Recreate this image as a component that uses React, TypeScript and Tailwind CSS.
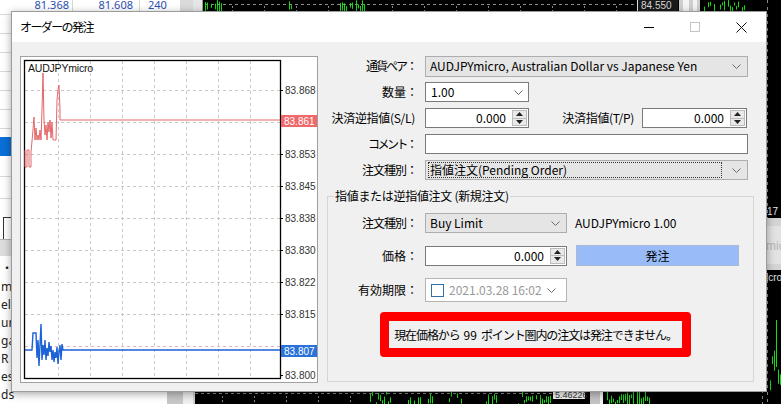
import React from "react";

const JP = "font-['Noto_Sans_CJK_JP','Noto_Sans',sans-serif]";

function rng(seed: number) {
  let s = seed;
  return () => {
    s = (s * 9301 + 49297) % 233280;
    return s / 233280;
  };
}

function greenBars(x0: number, x1: number, y0: number, y1: number, seed: number, density = 0.75) {
  const r = rng(seed);
  const out: React.ReactNode[] = [];
  for (let x = x0; x <= x1; x += 2) {
    if (r() > density) continue;
    const a = y0 + r() * (y1 - y0);
    const b = y0 + r() * (y1 - y0);
    out.push(
      <line
        key={`${seed}-${x}`}
        x1={x + 0.5}
        x2={x + 0.5}
        y1={Math.min(a, b)}
        y2={Math.max(a, b) + 3}
        stroke="#14e014"
        strokeWidth="1"
      />
    );
  }
  return out;
}

function Chevron() {
  return (
    <svg width="9" height="5" viewBox="0 0 9 5" className="shrink-0">
      <polyline points="0.5,0.5 4.5,4.5 8.5,0.5" fill="none" stroke="#6b6b6b" strokeWidth="1" />
    </svg>
  );
}

function Spinner() {
  return (
    <div className="flex flex-col w-[15px] my-[1px] mr-[1px] border border-[#bcbcbc] bg-[#e9e9e9]">
      <div className="flex-1 flex items-center justify-center border-b border-[#bcbcbc]">
        <svg width="7" height="4" viewBox="0 0 7 4">
          <polygon points="0,4 3.5,0 7,4" fill="#222" />
        </svg>
      </div>
      <div className="flex-1 flex items-center justify-center">
        <svg width="7" height="4" viewBox="0 0 7 4">
          <polygon points="0,0 7,0 3.5,4" fill="#222" />
        </svg>
      </div>
    </div>
  );
}

function NumberBox({ className }: { className: string }) {
  return (
    <div className={"flex h-[20px] border border-[#7a7a7a] bg-white " + className}>
      <div className="flex-1 flex items-center justify-end pr-[6px] text-[12px]">0.000</div>
      <Spinner />
    </div>
  );
}

function Label({ text, colon = true, className }: { text: string; colon?: boolean; className: string }) {
  return (
    <div className={"shrink-0 text-right text-[12px] text-black whitespace-nowrap " + className}>
      {text}
      {colon && <span className="inline-block w-[12px] text-center tracking-normal">：</span>}
    </div>
  );
}

// page coords -> chart svg coords (svg origin at page 21,57)
const toPts = (pts: number[][]) => pts.map(([x, y]) => `${x - 21},${y - 57}`).join(" ");

const ASK = [
  [25, 150], [25, 167], [27, 167], [27, 150], [29, 150], [29, 167], [31, 167], [31, 152],
  [33, 130], [34, 117], [35, 140], [36, 128], [37, 140], [38, 135], [39, 140], [40, 130],
  [41, 140], [42, 110], [43, 73], [44, 120], [45, 135], [46, 125], [47, 140], [48, 122],
  [49, 132], [50, 120], [51, 138], [52, 122], [53, 140], [56, 140], [57, 100], [58, 90],
  [59, 85], [60, 110], [60, 120], [280, 120],
];

const BID = [
  [25, 350], [32, 350], [33, 333], [36, 333], [37, 358], [38, 340], [39, 366], [40, 345],
  [41, 324], [42, 360], [43, 345], [44, 355], [45, 340], [46, 360], [47, 348], [48, 356],
  [49, 342], [50, 352], [51, 346], [52, 360], [53, 350], [54, 362], [55, 352], [56, 358],
  [57, 347], [58, 364], [59, 352], [60, 345], [61, 360], [62, 344], [63, 350], [280, 350],
];

const V_GRID = [37, 69, 101, 133, 165, 197, 229];
const H_GRID = [33, 65, 97, 129, 161, 193, 225, 257, 289];
const AXIS: [number, string][] = [
  [33, "83.868"],
  [97, "83.853"],
  [129, "83.845"],
  [161, "83.838"],
  [193, "83.830"],
  [225, "83.822"],
  [257, "83.815"],
  [318, "83.800"],
];

function PriceChart() {
  return (
    <div className="w-[298px] h-[327px] shrink-0 border border-[#a0a0a0] bg-white">
      <svg width="296" height="325" viewBox="0 0 296 325" className="block">
        {V_GRID.map((x) => (
          <line key={"v" + x} x1={x + 0.5} x2={x + 0.5} y1="4" y2="322" stroke="#c9c9c9" strokeDasharray="3 3" />
        ))}
        {H_GRID.map((y) => (
          <line key={"h" + y} x1="4" x2="259" y1={y + 0.5} y2={y + 0.5} stroke={y === 289 ? "#e6b3c4" : "#c9c9c9"} strokeDasharray="3 3" />
        ))}
        <rect x="3.5" y="3.5" width="256" height="318" fill="none" stroke="#000" strokeWidth="1.3" />
        {AXIS.map(([y, t]) => (
          <g key={t}>
            <line x1="259" x2="262" y1={y + 0.5} y2={y + 0.5} stroke="#000" />
            <text x="264" y={y + 4} fontSize="10" fontFamily="'Liberation Sans', sans-serif" fill="#333">
              {t}
            </text>
          </g>
        ))}
        <text x="7" y="15" fontSize="10.5" fontFamily="'Liberation Sans', sans-serif" fill="#111" letterSpacing="-0.2">
          AUDJPYmicro
        </text>
        <polyline points={toPts(ASK)} fill="none" stroke="#e4676a" strokeWidth="1" />
        <polyline points={toPts(BID)} fill="none" stroke="#1d62d6" strokeWidth="1.4" />
        <rect x="260" y="58" width="36" height="12" fill="#f0686a" />
        <text x="263" y="68" fontSize="10" fontFamily="'Liberation Sans', sans-serif" fill="#fff">
          83.861
        </text>
        <rect x="260" y="288" width="36" height="12" fill="#2a72d9" />
        <text x="263" y="298" fontSize="10" fontFamily="'Liberation Sans', sans-serif" fill="#fff">
          83.807
        </text>
      </svg>
    </div>
  );
}

function Backdrop() {
  return (
    <svg width="588" height="404" viewBox="0 0 588 404" className="block shrink-0">
      <g transform="translate(-193,0)">
        <rect x="193" y="0" width="588" height="404" fill="#000" />
        <rect x="193" y="0" width="10" height="14" fill="#e6e6e6" />
        <line x1="202.5" x2="202.5" y1="0" y2="14" stroke="#9a9a9a" />
        <rect x="193" y="386" width="2" height="18" fill="#d0d0d0" />
        {/* top chart strip */}
        <line x1="205" x2="637" y1="4.5" y2="4.5" stroke="#8a8a8a" strokeDasharray="3 3" />
        {[232, 264, 296, 328, 360, 392, 424, 456, 488, 520, 552, 584, 616].map((x) => (
          <line key={"t" + x} x1={x + 0.5} x2={x + 0.5} y1="6" y2="12" stroke="#8a8a8a" strokeDasharray="2 2" />
        ))}
        {greenBars(205, 222, 0, 10, 3)}
        {greenBars(289, 292, 0, 12, 7)}
        {greenBars(340, 364, 0, 10, 11)}
        <rect x="637" y="0" width="41" height="12" fill="#1a1a1a" />
        <line x1="637.5" x2="637.5" y1="0" y2="12" stroke="#e0e0e0" />
        <text x="641" y="9" fontSize="10" fontFamily="'Liberation Sans', sans-serif" fill="#d8d8d8">
          84.550
        </text>
        <rect x="679" y="0" width="21" height="14" fill="#cfcfcf" />
        <rect x="683" y="0" width="6" height="14" fill="#f4f4f4" />
        <rect x="693" y="0" width="4" height="14" fill="#f4f4f4" />
        {greenBars(702, 745, 0, 10, 19)}
        {/* right edge */}
        <line x1="767.5" x2="767.5" y1="0" y2="404" stroke="#8a8a8a" strokeDasharray="3 4" />
        <text x="767" y="215" fontSize="10" fontFamily="'Liberation Sans', sans-serif" fill="#e8e8e8">
          17 M
        </text>
        <rect x="766" y="218" width="15" height="52" fill="#d4d4d4" />
        <rect x="766" y="226" width="15" height="38" fill="#e2e2e2" />
        <text x="766" y="250" fontSize="12" fontFamily="'Liberation Sans', sans-serif" fill="#b4b4b4">
          mic
        </text>
        <text x="766" y="281" fontSize="10" fontFamily="'Liberation Sans', sans-serif" fill="#e0e0e0">
          icro,
        </text>
        {greenBars(770, 781, 318, 392, 23, 0.9)}
        {/* bottom strip */}
        <line x1="195" x2="552" y1="393.5" y2="393.5" stroke="#8a8a8a" strokeDasharray="3 3" />
        {[222, 254, 286, 318, 350].map((x) => (
          <line key={"b" + x} x1={x + 0.5} x2={x + 0.5} y1="396" y2="404" stroke="#8a8a8a" strokeDasharray="2 2" />
        ))}
        {greenBars(370, 392, 391, 404, 31)}
        {greenBars(408, 432, 393, 404, 37)}
        {greenBars(445, 462, 391, 404, 41)}
        {greenBars(484, 497, 393, 404, 43)}
        {greenBars(518, 536, 391, 404, 47)}
        {greenBars(540, 550, 395, 404, 53)}
        <rect x="553" y="390" width="32" height="9" fill="#f2f2f2" />
        <text x="555" y="398" fontSize="9" fontFamily="'Liberation Sans', sans-serif" fill="#333">
          5.46226
        </text>
        <rect x="590" y="390" width="10" height="14" fill="#c4c4c4" />
        <rect x="600" y="390" width="3" height="14" fill="#f0f0f0" />
        {greenBars(607, 650, 391, 404, 59, 0.85)}
        <line x1="762.5" x2="762.5" y1="390" y2="404" stroke="#8a8a8a" strokeDasharray="3 3" />
      </g>
    </svg>
  );
}

function LeftPanels() {
  const lowerRows = ["・ウ", "mp", "el", "ur", "ga", "R", "esc", "ds"];
  return (
    <div className="w-[193px] shrink-0 flex flex-col bg-white font-['Noto_Sans','Noto_Sans_CJK_JP',sans-serif]">
      {/* market watch */}
      <div className="h-[210px] flex overflow-hidden">
        <div className="flex-1 flex flex-col">
          <div className="h-[19px] mt-[-4px] flex items-center border-b border-[#d8d8d8] text-[11px] text-[#2b4fb5]">
            <div className="w-[73px] h-full flex items-center justify-end pr-[3px] border-r border-[#d8d8d8]">81.368</div>
            <div className="w-[67px] h-full flex items-center justify-end pr-[6px] border-r border-[#d8d8d8]">81.608</div>
            <div className="pl-[8px]">240</div>
          </div>
          {[0, 1, 2, 3, 4, 5].map((i) => (
            <div key={i} className="h-[19px] border-b border-[#d8d8d8]" />
          ))}
          <div className="h-[8px]" />
          <div className="h-[19px] bg-[#0a6fd6]" />
          <div className="h-[21px] border-b border-[#d8d8d8]" />
          <div className="h-[22px] border-b border-[#d8d8d8]" />
        </div>
        <div className="w-[13px] bg-[#dadada]" />
      </div>
      {/* navigator */}
      <div className="flex-1 flex">
        <div className="flex-1 flex flex-col">
          <div className="h-[8px]" />
          <div className="h-[22px] ml-[3px] border-l border-t border-[#333] bg-white" />
          <div className="h-[17px] bg-[#dcdcdc] border-t border-[#b0b0b0]" />
          <div className="flex flex-col pt-[4px]">
            {lowerRows.map((t) => (
              <div key={t} className="h-[18px] flex items-center text-[12px] text-[#222] pl-[1px]">
                {t}
              </div>
            ))}
          </div>
        </div>
        <div className="w-[16px] bg-[#c8c8c8]" />
        <div className="w-[10px] bg-[#f0f0f0]" />
      </div>
    </div>
  );
}

function OrderDialog() {
  return (
    <div
      className={
        "absolute left-[11px] top-[11px] w-[756px] h-[381px] flex flex-col border border-[#9c9c9c] bg-[#f0f0f0] shadow-[0_2px_8px_rgba(0,0,0,0.35)] text-black " +
        JP
      }
    >
      {/* title bar */}
      <div className="h-[30px] shrink-0 flex items-center bg-white">
        <div className="pl-[8px] text-[12px] flex-1 tracking-[-1.6px]">オーダーの発注</div>
        <div className="flex h-full pr-[2px]">
          <div className="w-[46px] flex items-center justify-center">
            <div className="w-[10px] h-px bg-black" />
          </div>
          <div className="w-[46px] flex items-center justify-center">
            <div className="w-[10px] h-[10px] border border-[#c4c4c4]" />
          </div>
          <div className="w-[46px] flex items-center justify-center">
            <svg width="11" height="11" viewBox="0 0 11 11">
              <path d="M0.5 0.5 L10.5 10.5 M10.5 0.5 L0.5 10.5" stroke="#111" strokeWidth="1" />
            </svg>
          </div>
        </div>
      </div>

      {/* body */}
      <div className="flex-1 flex pl-[8px] pt-[14px] gap-[9px]">
        <PriceChart />

        <div className="w-[427px] flex flex-col">
          <div className="flex flex-col gap-[6px]">
            <div className="h-[20px] flex items-center">
              <Label text="通貨ペア" className="w-[91px] tracking-[-2px]" />
              <div className="ml-[7px] w-[323px] h-[21px] flex items-center border border-[#adadad] bg-[#e5e5e5] pl-[4px] pr-[6px]">
                <div className="flex-1 text-[12px]">AUDJPYmicro, Australian Dollar vs Japanese Yen</div>
                <Chevron />
              </div>
            </div>
            <div className="h-[20px] flex items-center">
              <Label text="数量" className="w-[91px]" />
              <div className="ml-[7px] w-[104px] h-[20px] flex items-center border border-[#7a7a7a] bg-white pl-[5px] pr-[5px]">
                <div className="flex-1 text-[12px]">1.00</div>
                <Chevron />
              </div>
            </div>
            <div className="h-[20px] flex items-center">
              <Label text="決済逆指値(S/L)" colon={false} className="w-[88px] mr-[3px] tracking-[-0.3px]" />
              <NumberBox className="ml-[7px] w-[104px]" />
              <Label text="決済指値(T/P)" colon={false} className="w-[105px] tracking-[-0.3px]" />
              <NumberBox className="ml-[8px] w-[105px]" />
            </div>
            <div className="h-[20px] flex items-center">
              <Label text="コメント" className="w-[91px] tracking-[-2.5px]" />
              <div className="ml-[7px] w-[323px] h-[20px] border border-[#7a7a7a] bg-white" />
            </div>
            <div className="h-[20px] flex items-center">
              <Label text="注文種別" className="w-[91px] tracking-[-1px]" />
              <div className="ml-[7px] w-[323px] h-[20px] flex items-center border border-[#adadad] bg-[#e5e5e5] pl-[2px] pr-[6px]">
                <div className="flex-1 h-[16px] mr-[10px] flex items-center border border-dotted border-[#333] pl-[1px] text-[12px]">
                  指値注文(Pending Order)
                </div>
                <Chevron />
              </div>
            </div>
          </div>

          <fieldset className="mt-[8px] h-[194px] border border-[#d5d5d5]">
            <legend className="ml-[6px] px-[1px] text-[12px] leading-[16px] tracking-[-0.3px]">指値または逆指値注文 (新規注文)</legend>
            <div className="flex flex-col pt-[9px]">
              <div className="h-[20px] flex items-center">
                <Label text="注文種別" className="w-[90px] tracking-[-1px]" />
                <div className="ml-[7px] w-[142px] h-[20px] flex items-center border border-[#adadad] bg-[#e5e5e5] pl-[4px] pr-[6px]">
                  <div className="flex-1 text-[12px]">Buy Limit</div>
                  <Chevron />
                </div>
                <div className="ml-[8px] text-[12px]">AUDJPYmicro 1.00</div>
              </div>
              <div className="mt-[12px] h-[21px] flex items-center">
                <Label text="価格" className="w-[90px]" />
                <NumberBox className="ml-[7px] w-[142px]" />
                <div className="ml-[9px] w-[163px] h-[21px] flex items-center justify-center border border-[#a9b9d3] bg-[#99bbf7] text-[12px]">
                  発注
                </div>
              </div>
              <div className="mt-[12px] h-[24px] flex items-center">
                <Label text="有効期限" className="w-[90px]" />
                <div className="ml-[7px] w-[142px] h-[24px] flex items-center border border-[#b4b4b4] bg-white pl-[5px] pr-[10px]">
                  <div className="w-[13px] h-[13px] shrink-0 border border-[#2f6fa8] bg-white" />
                  <div className="flex-1 ml-[5px] text-[12px] text-[#999] overflow-hidden whitespace-nowrap">2021.03.28 16:02</div>
                  <Chevron />
                </div>
              </div>
              <div className="mt-[10px] ml-[52px] w-[311px] h-[45px] rounded-[4px] border-[9px] border-[#ff0000] flex items-center justify-center text-[12px] tracking-[-1.1px] whitespace-nowrap">
                <span>現在価格から</span>
                <span className="mx-[4px] tracking-normal">99</span>
                <span>ポイント圏内の注文は発注できません。</span>
              </div>
            </div>
          </fieldset>
        </div>
      </div>
    </div>
  );
}

export default function App() {
  return (
    <div className="relative w-[781px] h-[404px] overflow-hidden flex bg-black">
      <LeftPanels />
      <Backdrop />
      <OrderDialog />
    </div>
  );
}
